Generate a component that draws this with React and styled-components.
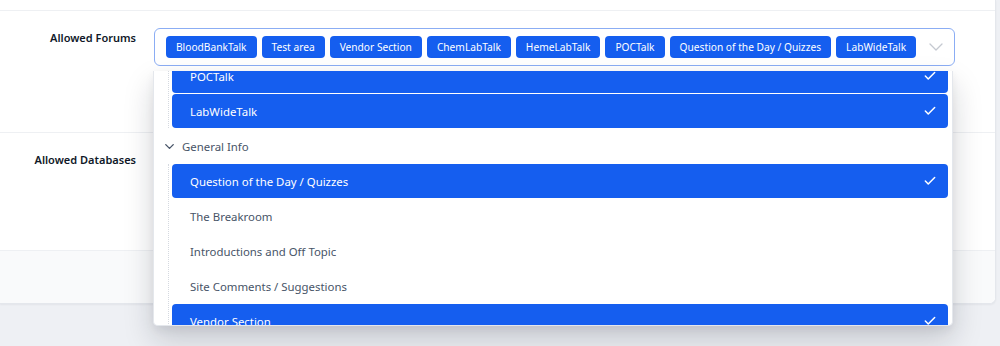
import React, { useLayoutEffect, useRef } from 'react';
import styled, { createGlobalStyle } from 'styled-components';
import { Check, ChevronDown } from 'lucide-react';

const Global = createGlobalStyle`
  html, body { margin: 0; padding: 0; background: #eef0f4; }
  body { font-family: "Noto Sans", "Open Sans", sans-serif; overflow: hidden; }
  * { box-sizing: border-box; }
`;

const Page = styled.div`
  width: 1000px;
  height: 346px;
  background: #eef0f4;
  padding-right: 4px;
`;

const Card = styled.div`
  background: #fff;
  border-right: 1px solid #e4e7ec;
  border-bottom: 1px solid #e4e7ec;
  border-radius: 0 0 6px 0;
  box-shadow: 0 1px 2px rgba(16, 24, 40, 0.05);
`;

const TopStrip = styled.div`
  height: 11px;
  border-bottom: 1px solid #eef0f3;
`;

const Row = styled.div`
  display: grid;
  grid-template-columns: 136px 801px;
  column-gap: 18px;
  align-items: start;
  height: ${(p) => p.$h}px;
  padding-top: 17px;
  border-bottom: 1px solid #eef0f3;
`;

const Label = styled.div`
  margin-top: 2px;
  text-align: right;
  font-size: 11px;
  line-height: 16px;
  font-weight: 600;
  color: #101828;
`;

const Field = styled.div`
  position: relative;
`;

const Control = styled.div`
  height: 38px;
  display: flex;
  align-items: center;
  gap: 5px;
  padding: 0 6px 0 11px;
  border: 1px solid #8badf4;
  border-radius: 6px;
  background: #fff;
`;

const Tag = styled.span`
  height: 22px;
  line-height: 22px;
  padding: 0 10px;
  background: #155eef;
  color: #fff;
  border-radius: 4px;
  font-size: 10.2px;
  white-space: nowrap;
`;

const Caret = styled.span`
  margin-left: auto;
  display: flex;
  color: #c5c9d1;
`;

const Dropdown = styled.div`
  position: absolute;
  top: calc(100% + 5px);
  left: -1px;
  width: 800px;
  height: 255px;
  background: #fff;
  border: 1px solid #e4e7ec;
  border-top: none;
  border-radius: 0 0 5px 5px;
  box-shadow: 0 14px 30px rgba(16, 24, 40, 0.18), 0 4px 10px rgba(16, 24, 40, 0.06);
  overflow-y: auto;
  scrollbar-width: none;
  z-index: 10;
  &::-webkit-scrollbar { display: none; }
`;

const List = styled.div`
  display: flex;
  flex-direction: column;
  gap: 1px;
  padding: 0 4px 40px 0;
`;

const GroupHeader = styled.div`
  height: 34px;
  display: flex;
  align-items: center;
  gap: 5px;
  padding-left: 8px;
  color: #475467;
  font-size: 11.4px;
`;

const Children = styled.div`
  display: flex;
  flex-direction: column;
  gap: 1px;
  margin-left: 14px;
  padding-left: 3px;
  border-left: 1px dotted #d5d9e0;
`;

const Item = styled.div`
  height: 34px;
  display: flex;
  align-items: center;
  justify-content: space-between;
  padding: 0 11px 0 18px;
  border-radius: 4px;
  font-size: 11.4px;
  background: ${(p) => (p.$selected ? '#155eef' : 'transparent')};
  color: ${(p) => (p.$selected ? '#fff' : '#475467')};
`;

const Footer = styled.div`
  height: 52px;
  background: #f9fafb;
  border-radius: 0 0 6px 0;
`;

const tags = [
  'BloodBankTalk',
  'Test area',
  'Vendor Section',
  'ChemLabTalk',
  'HemeLabTalk',
  'POCTalk',
  'Question of the Day / Quizzes',
  'LabWideTalk',
];

const groups = [
  {
    name: 'Laboratory Talk',
    items: ['BloodBankTalk', 'ChemLabTalk', 'HemeLabTalk', 'POCTalk', 'LabWideTalk'],
  },
  {
    name: 'General Info',
    items: [
      'Question of the Day / Quizzes',
      'The Breakroom',
      'Introductions and Off Topic',
      'Site Comments / Suggestions',
      'Vendor Section',
    ],
  },
  { name: 'Site Admin', items: ['Test area'] },
];

export default function App() {
  const ref = useRef(null);
  useLayoutEffect(() => {
    if (ref.current) ref.current.scrollTop = 152;
  }, []);

  return (
    <Page>
      <Global />
      <Card>
        <TopStrip />
        <Row $h={122}>
          <Label>Allowed Forums</Label>
          <Field>
            <Control>
              {tags.map((t) => (
                <Tag key={t}>{t}</Tag>
              ))}
              <Caret>
                <ChevronDown size={24} strokeWidth={1.3} />
              </Caret>
            </Control>
            <Dropdown ref={ref}>
              <List>
                {groups.map((g) => (
                  <React.Fragment key={g.name}>
                    <GroupHeader>
                      <ChevronDown size={15} strokeWidth={2.2} />
                      {g.name}
                    </GroupHeader>
                    <Children>
                      {g.items.map((it) => {
                        const sel = tags.includes(it);
                        return (
                          <Item key={it} $selected={sel}>
                            {it}
                            {sel && <Check size={14} strokeWidth={2.6} />}
                          </Item>
                        );
                      })}
                    </Children>
                  </React.Fragment>
                ))}
              </List>
            </Dropdown>
          </Field>
        </Row>
        <Row $h={118}>
          <Label>Allowed Databases</Label>
          <div />
        </Row>
        <Footer />
      </Card>
    </Page>
  );
}
